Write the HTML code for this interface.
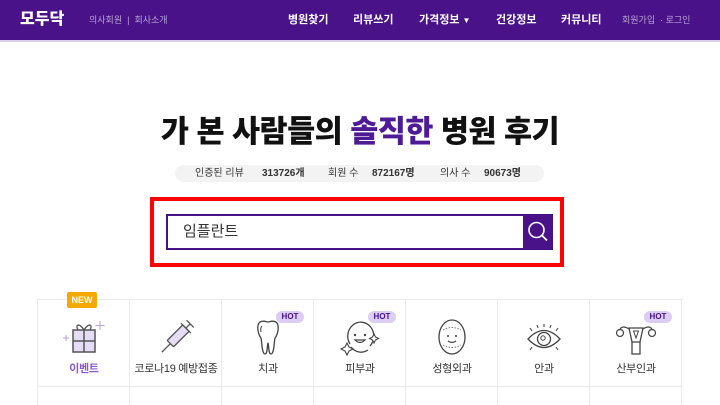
<!DOCTYPE html>
<html><head><meta charset="utf-8"><style>
*{margin:0;padding:0;box-sizing:border-box}
html,body{width:720px;height:405px;overflow:hidden}
body{background:#fff;font-family:"Liberation Sans","Noto Sans CJK KR",sans-serif;position:relative}
.hd{position:absolute;left:0;top:0;width:720px;height:42px;background:#4a1288;border-bottom:2px solid #d9cfe8}
.hd span{position:absolute;top:0;line-height:40px;color:#fff;white-space:nowrap}
.sm{font-size:9px;color:#b9a6d6 !important}
.nv{font-size:11px;font-weight:bold}
.title{position:absolute;top:107px;left:0;width:720px;text-align:center;font-size:30.5px;font-weight:900;color:#111;letter-spacing:-0.5px}
.title b{color:#4e1a96}
.pill{position:absolute;left:175px;top:165px;width:369px;height:17px;background:#f3f3f3;border-radius:9px;font-size:10px;color:#333;line-height:17px}
.pill span{position:absolute;top:0}
.red{position:absolute;left:150px;top:197px;width:414px;height:70px;border:4px solid #f00}
.inp{position:absolute;left:166px;top:214px;width:358px;height:36px;border:2px solid #4a1288;border-right:none;font-size:15px;color:#333;line-height:32px;padding-left:15px}
.btn{position:absolute;left:523px;top:214px;width:30px;height:36px;background:#4a1288}
.grid{position:absolute;left:37px;top:299px;width:646px;height:106px;overflow:hidden;border-top:1px solid #e8eaee;border-left:1px solid #e8eaee}
.c{position:absolute;top:0;width:92px;height:87px;border-right:1px solid #e8eaee;border-bottom:1px solid #e8eaee}
.c2{position:absolute;top:87px;width:92px;height:18px;border-right:1px solid #e8eaee}
.lb{position:absolute;top:60px;left:0;width:92px;text-align:center;font-size:11px;color:#333;white-space:nowrap;letter-spacing:-0.3px}
.hot{position:absolute;top:11px;left:54px;width:28px;height:12px;border-radius:6px;background:#dccdf2;color:#4a1288;font-size:8px;font-weight:bold;text-align:center;line-height:12px}
.new{position:absolute;left:67px;top:292px;width:30px;height:16px;background:#f5a800;border-radius:2px;color:#fff;font-size:9px;font-weight:bold;text-align:center;line-height:16px}
svg.i{position:absolute;left:24px;top:18px}
</style></head><body>
<div class="hd">
<span style="left:20px;font-size:16px;font-weight:900">모두닥</span>
<span class="sm" style="left:89px">의사회원 &nbsp;|&nbsp; 회사소개</span>
<span class="nv" style="left:288px">병원찾기</span>
<span class="nv" style="left:353px">리뷰쓰기</span>
<span class="nv" style="left:419px">가격정보 <span style="position:static;font-size:8px">▼</span></span>
<span class="nv" style="left:496px">건강정보</span>
<span class="nv" style="left:561px">커뮤니티</span>
<span class="sm" style="left:622px">회원가입 &nbsp;· 로그인</span>
</div>
<div class="title">가 본 사람들의 <b>솔직한</b> 병원 후기</div>
<div class="pill">
<span style="left:20px">인증된 리뷰</span><span style="left:87px;font-weight:bold">313726개</span>
<span style="left:153px">회원 수</span><span style="left:197px;font-weight:bold">872167명</span>
<span style="left:265px">의사 수</span><span style="left:309px;font-weight:bold">90673명</span>
</div>
<div class="red"></div>
<div class="inp">임플란트</div>
<div class="btn"><svg width="30" height="36" viewBox="0 0 30 36"><circle cx="13.5" cy="16" r="7.5" fill="none" stroke="#fff" stroke-width="1.6"/><line x1="19" y1="21.5" x2="24" y2="26.5" stroke="#fff" stroke-width="1.8"/></svg></div>
<div class="grid">
<div class="c" style="left:0">
<svg class="i" width="44" height="40" viewBox="0 0 44 40"><rect x="11" y="12" width="22" height="22" fill="#e5dcf6" stroke="#555" stroke-width="1.5"/><line x1="22" y1="12" x2="22" y2="34" stroke="#555" stroke-width="1.5"/><line x1="11" y1="23" x2="33" y2="23" stroke="#555" stroke-width="1.5"/><path d="M22 12 C17 4 13 7 16 12 M22 12 C27 4 31 7 28 12" fill="none" stroke="#555" stroke-width="1.3"/><path d="M38 3v9M33.5 7.5h9M4 17v6M1 20h6" stroke="#b6a3dc" stroke-width="1"/></svg>
<div class="lb" style="color:#8a5cc9;font-weight:bold">이벤트</div></div>
<div class="c" style="left:92px">
<svg class="i" width="44" height="40" viewBox="0 0 44 40"><g transform="rotate(45 22 20)"><rect x="17.5" y="6" width="9" height="22" rx="1" fill="#e5dcf6" stroke="#555" stroke-width="1.3"/><path d="M22 28v12M15 6h14M22 6V0M17 0h10" stroke="#555" stroke-width="1.3"/></g></svg>
<div class="lb">코로나19 예방접종</div></div>
<div class="c" style="left:184px"><div class="hot">HOT</div>
<svg class="i" width="44" height="40" viewBox="0 0 44 40"><path d="M14 4c4-2 6 0 8 0s4-2 8 0c4 3 2 12-1 16-1 5-1 16-4 16-3 0-2-11-3-11s0 11-3 11c-3 0-3-11-4-16-3-4-5-13-1-16z" fill="none" stroke="#444" stroke-width="1.3"/><path d="M16 8q-2 2-1 6" fill="none" stroke="#444"/></svg>
<div class="lb">치과</div></div>
<div class="c" style="left:276px"><div class="hot">HOT</div>
<svg class="i" width="44" height="40" viewBox="0 0 44 40"><path d="M12 26A13 14 0 1 1 32 28" fill="none" stroke="#444" stroke-width="1.3"/><path d="M13 29A13 14 0 0 0 30 32" fill="none" stroke="#444" stroke-width="1.3"/><circle cx="17" cy="17" r="1.2" fill="#444"/><circle cx="27" cy="17" r="1.2" fill="#444"/><path d="M17 22q5 5 10 0z" fill="none" stroke="#444" stroke-width="1.2"/><path d="M9 25l2 4 4 2-4 2-2 4-2-4-4-2 4-2z M36 16l1.5 3 3 1.5-3 1.5-1.5 3-1.5-3-3-1.5 3-1.5z" fill="#fff" stroke="#444" stroke-width="1.1"/></svg>
<div class="lb">피부과</div></div>
<div class="c" style="left:368px">
<svg class="i" width="44" height="40" viewBox="0 0 44 40"><ellipse cx="22" cy="19" rx="13" ry="17" fill="none" stroke="#444" stroke-width="1.3"/><path d="M13 12q9-5 18 0M13 27q9 5 18 0" fill="none" stroke="#777" stroke-dasharray="1.5 1.5"/><circle cx="18" cy="18" r="1" fill="#444"/><circle cx="26" cy="18" r="1" fill="#444"/><path d="M18 23q4 3 8 0" fill="none" stroke="#444" stroke-width="1.2"/></svg>
<div class="lb">성형외과</div></div>
<div class="c" style="left:460px">
<svg class="i" width="44" height="40" viewBox="0 0 44 40"><path d="M6 21q16-17 32 0q-16 17-32 0z" fill="none" stroke="#444" stroke-width="1.3"/><circle cx="22" cy="21" r="6.5" fill="none" stroke="#444" stroke-width="1.3"/><circle cx="21" cy="20" r="2.2" fill="none" stroke="#444"/><path d="M10 13l-2-3M16 10l-1-3M22 9v-3M28 10l1-3M34 13l2-3M10 29l-2 3M34 29l2 3" stroke="#444" stroke-width="1.1"/></svg>
<div class="lb">안과</div></div>
<div class="c" style="left:552px"><div class="hot">HOT</div>
<svg class="i" width="44" height="40" viewBox="0 0 44 40"><path d="M15 10h14l-3 14h-8z M18 24v12h8V24" fill="none" stroke="#444" stroke-width="1.3"/><path d="M15 11q-6-4-9 0M29 11q6-4 9 0" fill="none" stroke="#444" stroke-width="1.2"/><circle cx="6" cy="15" r="3.5" fill="none" stroke="#444" stroke-width="1.2"/><circle cx="38" cy="15" r="3.5" fill="none" stroke="#444" stroke-width="1.2"/><path d="M19.5 13h5l-2.5 7z" fill="none" stroke="#444"/></svg>
<div class="lb">산부인과</div></div>
<div class="c2" style="left:0"></div><div class="c2" style="left:92px"></div><div class="c2" style="left:184px"></div><div class="c2" style="left:276px"></div><div class="c2" style="left:368px"></div><div class="c2" style="left:460px"></div><div class="c2" style="left:552px"></div>
</div>
<div class="new">NEW</div>
</body></html>
